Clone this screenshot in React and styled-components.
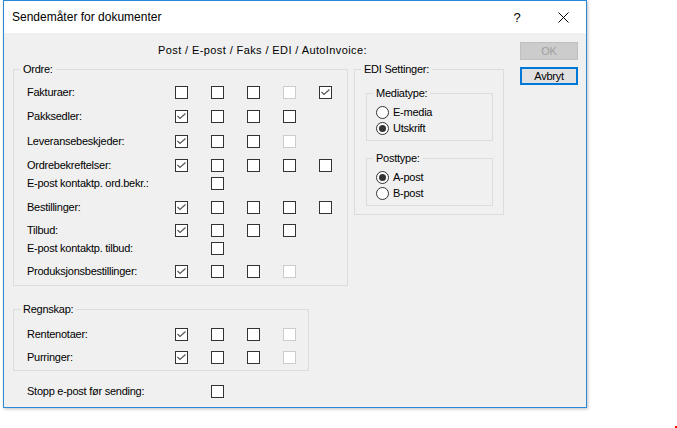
import React from 'react';
import styled, { createGlobalStyle } from 'styled-components';

const GlobalStyle = createGlobalStyle`
  body {
    margin: 0;
    background: #fff;
    font-family: "Liberation Sans", Arial, sans-serif;
  }
  * {
    box-sizing: border-box;
  }
`;

const Page = styled.div`
  position: relative;
  width: 677px;
  height: 428px;
  padding-left: 3px;
  overflow: hidden;
`;

const Marker = styled.span`
  position: absolute;
  left: 675px;
  top: 426px;
  width: 2px;
  height: 2px;
  background: #ff0000;
`;

const Window = styled.div`
  width: 584px;
  height: 408px;
  border: 1px solid #2b88d8;
  box-shadow: 1px 1px 3px rgba(0, 0, 0, 0.25);
  display: flex;
  flex-direction: column;
`;

const TitleBar = styled.div`
  height: 32px;
  background: #fff;
  display: flex;
  align-items: center;
`;

const Title = styled.div`
  flex: 1;
  padding-left: 8px;
  font-size: 12px;
  color: #000;
`;

const CaptionButton = styled.div`
  width: 46px;
  height: 32px;
  display: flex;
  align-items: center;
  justify-content: center;
  font-size: 13px;
  color: #000;
`;

const Body = styled.div`
  flex: 1;
  background: #f0f0f0;
  display: flex;
  gap: 16px;
  padding: 9px 0 0 9px;
  font-size: 11px;
  letter-spacing: -0.25px;
  color: #000;
`;

const Main = styled.div`
  width: 491px;
  display: flex;
  flex-direction: column;
`;

const Header = styled.div`
  padding: 1px 0 0 8px;
  line-height: 14px;
  text-align: center;
  letter-spacing: 0.4px;
  margin-bottom: 5px;
`;

const TopRow = styled.div`
  display: flex;
  align-items: flex-start;
  gap: 6px;
`;

const Group = styled.fieldset`
  margin: ${({ $mt }) => $mt || 0}px 0 0 0;
  padding: 0;
  min-width: 0;
  width: ${({ $w }) => $w}px;
  border: 1px solid #dcdcdc;
`;

const Legend = styled.legend`
  margin-left: 6px;
  padding: 0 3px;
  line-height: 14px;
  font-size: 11px;
`;

const GroupBody = styled.div`
  padding: ${({ $pad }) => $pad};
`;

const CheckRow = styled.div`
  display: grid;
  grid-template-columns: 148px repeat(5, 36px);
  align-items: center;
  height: 17px;
  margin-top: ${({ $gap }) => $gap || 0}px;
  padding-left: ${({ $indent }) => $indent || 0}px;
`;

const Label = styled.span`
  white-space: nowrap;
  line-height: 17px;
`;

const Box = styled.span`
  display: flex;
  width: 13px;
  height: 13px;
  border: 1px solid ${({ $disabled }) => ($disabled ? '#cccccc' : '#333333')};
  background: #fff;
`;

const RadioRow = styled.div`
  display: flex;
  align-items: center;
  gap: 4px;
  height: 16px;
`;

const Circle = styled.span`
  width: 13px;
  height: 13px;
  border-radius: 50%;
  border: 1px solid #333;
  background: #fff;
  display: flex;
  align-items: center;
  justify-content: center;

  &::after {
    content: '';
    width: 7px;
    height: 7px;
    border-radius: 50%;
    background: ${({ $on }) => ($on ? '#333' : 'transparent')};
  }
`;

const ButtonColumn = styled.div`
  display: flex;
  flex-direction: column;
  gap: 7px;
`;

const Button = styled.div`
  width: 58px;
  height: 18px;
  display: flex;
  align-items: center;
  justify-content: center;
  background: ${({ $disabled }) => ($disabled ? '#cccccc' : '#e1e1e1')};
  border: ${({ $focused, $disabled }) =>
    $focused ? '2px solid #0078d7' : `1px solid ${$disabled ? '#bfbfbf' : '#adadad'}`};
  color: ${({ $disabled }) => ($disabled ? '#a0a0a0' : '#000')};
`;

const Check = () => (
  <svg width="11" height="11" viewBox="0 0 11 11">
    <path d="M1.5 5 L4 7.5 L9.5 2.5" fill="none" stroke="#555" strokeWidth="1.2" />
  </svg>
);

const Checkbox = ({ state }) => {
  if (!state) return <span />;
  return (
    <Box $disabled={state === 'd'}>
      {state === 'x' && <Check />}
    </Box>
  );
};

// '' = no box, o = empty, x = checked, d = disabled
const ordre = [
  ['Fakturaer:', 0, ['o', 'o', 'o', 'd', 'x']],
  ['Pakksedler:', 7, ['x', 'o', 'o', 'o']],
  ['Leveransebeskjeder:', 8, ['x', 'o', 'o', 'd']],
  ['Ordrebekreftelser:', 7, ['x', 'o', 'o', 'o', 'o']],
  ['E-post kontaktp. ord.bekr.:', 1, ['', 'o']],
  ['Bestillinger:', 7, ['x', 'o', 'o', 'o', 'o']],
  ['Tilbud:', 6, ['x', 'o', 'o', 'o']],
  ['E-post kontaktp. tilbud:', 1, ['', 'o']],
  ['Produksjonsbestillinger:', 6, ['x', 'o', 'o', 'd']],
];

const regnskap = [
  ['Rentenotaer:', 0, ['x', 'o', 'o', 'd']],
  ['Purringer:', 6, ['x', 'o', 'o', 'd']],
];

const Rows = ({ rows }) =>
  rows.map(([label, gap, boxes]) => (
    <CheckRow key={label} $gap={gap}>
      <Label>{label}</Label>
      {boxes.map((s, i) => (
        <Checkbox key={i} state={s} />
      ))}
    </CheckRow>
  ));

const Radio = ({ on, children }) => (
  <RadioRow>
    <Circle $on={on} />
    <span>{children}</span>
  </RadioRow>
);

const CloseIcon = () => (
  <svg width="11" height="11" viewBox="0 0 11 11">
    <path d="M0.5 0.5 L10.5 10.5 M10.5 0.5 L0.5 10.5" stroke="#000" strokeWidth="1" fill="none" />
  </svg>
);

export default function App() {
  return (
    <Page>
      <GlobalStyle />
      <Window>
        <TitleBar>
          <Title>Sendemåter for dokumenter</Title>
          <CaptionButton>?</CaptionButton>
          <CaptionButton>
            <CloseIcon />
          </CaptionButton>
        </TitleBar>
        <Body>
          <Main>
            <Header>Post / E-post / Faks / EDI / AutoInvoice:</Header>
            <TopRow>
              <Group $w={335}>
                <Legend>Ordre:</Legend>
                <GroupBody $pad="8px 0 5px 13px">
                  <Rows rows={ordre} />
                </GroupBody>
              </Group>
              <Group $w={150}>
                <Legend>EDI Settinger:</Legend>
                <GroupBody $pad="10px 0 8px 11px">
                  <Group $w={127}>
                    <Legend>Mediatype:</Legend>
                    <GroupBody $pad="4px 0 4px 9px">
                      <Radio>E-media</Radio>
                      <Radio on>Utskrift</Radio>
                    </GroupBody>
                  </Group>
                  <Group $w={127} $mt={10}>
                    <Legend>Posttype:</Legend>
                    <GroupBody $pad="4px 0 4px 9px">
                      <Radio on>A-post</Radio>
                      <Radio>B-post</Radio>
                    </GroupBody>
                  </Group>
                </GroupBody>
              </Group>
            </TopRow>
            <Group $w={296} $mt={16}>
              <Legend>Regnskap:</Legend>
              <GroupBody $pad="10px 0 4px 13px">
                <Rows rows={regnskap} />
              </GroupBody>
            </Group>
            <CheckRow $gap={12} $indent={14}>
              <Label>Stopp e-post før sending:</Label>
              <span />
              <Checkbox state="o" />
            </CheckRow>
          </Main>
          <ButtonColumn>
            <Button $disabled>OK</Button>
            <Button $focused>Avbryt</Button>
          </ButtonColumn>
        </Body>
      </Window>
      <Marker />
    </Page>
  );
}
